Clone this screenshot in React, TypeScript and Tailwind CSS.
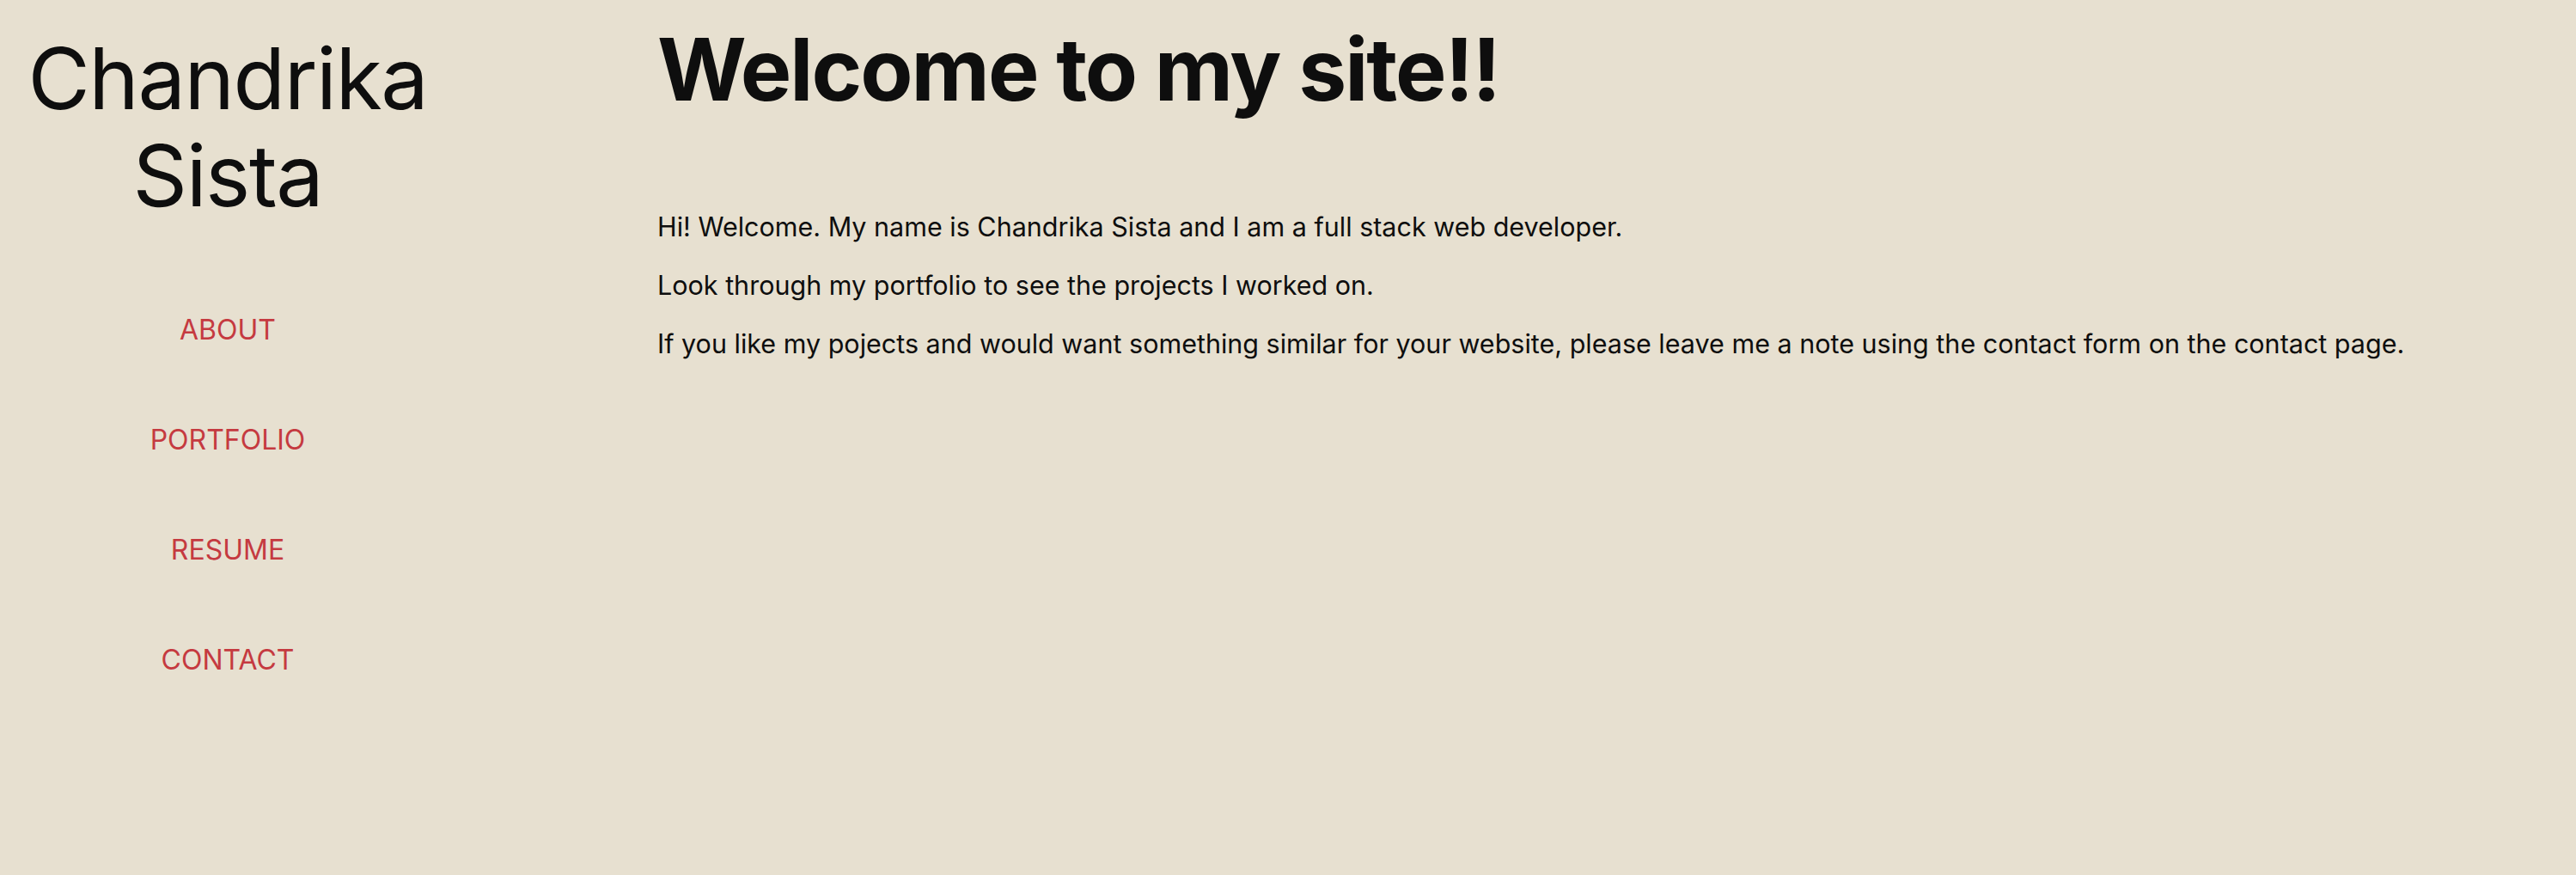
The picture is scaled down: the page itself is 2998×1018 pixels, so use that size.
const NAV_LINKS = ['About', 'Portfolio', 'Resume', 'Contact'];

export default function App() {
  return (
    <div
      className="min-h-screen flex bg-[#e7e0d0] text-[#0e0e0e]"
      style={{ fontFamily: 'Inter, "Liberation Sans", sans-serif' }}
    >
      {/* Sidebar */}
      <aside className="w-[530px] shrink-0 flex flex-col items-center pt-[35px]">
        <h2 className="text-[99px] leading-[113px] text-center tracking-[-0.015em]">
          Chandrika
          <br />
          Sista
        </h2>
        <nav className="mt-[99px] flex flex-col items-center gap-[80px]">
          {NAV_LINKS.map(link => (
            <a
              key={link}
              href="#"
              className="text-[32px] leading-[48px] uppercase text-[#c53a40]"
            >
              {link}
            </a>
          ))}
        </nav>
      </aside>

      {/* Main */}
      <main className="flex-1 pl-[235px] pt-[21px]">
        <h1 className="text-[100px] leading-[120px] font-bold tracking-[-0.02em]">
          Welcome to my site!!
        </h1>
        <div className="mt-[100px] space-y-[23px] text-[30.5px] leading-[45px]">
          <p>Hi! Welcome. My name is Chandrika Sista and I am a full stack web developer.</p>
          <p>Look through my portfolio to see the projects I worked on.</p>
          <p>
            If you like my pojects and would want something similar for your website, please leave me a note using the
            contact form on the contact page.
          </p>
        </div>
      </main>
    </div>
  );
}
